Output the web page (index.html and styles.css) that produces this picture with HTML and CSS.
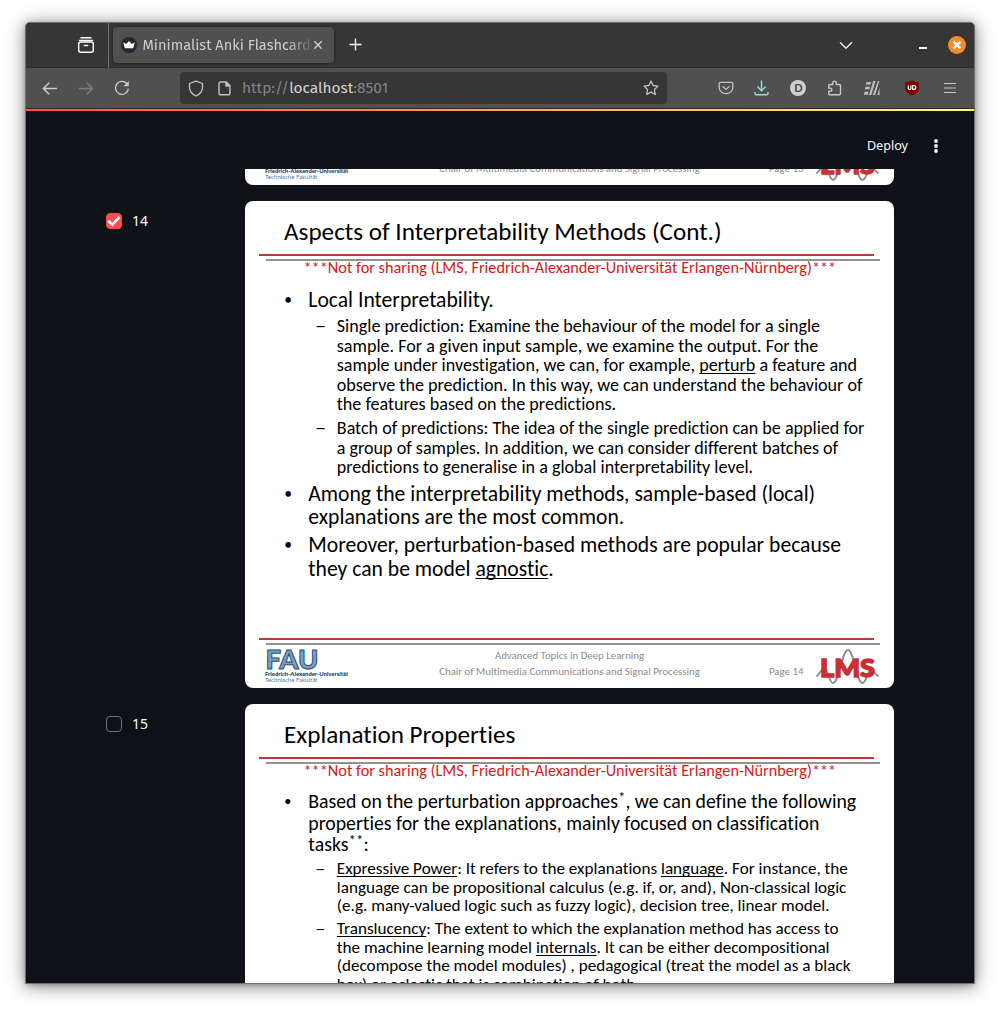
FILE: index.html
```html
<!DOCTYPE html>
<html lang="en">
<head>
<meta charset="utf-8">
<title>Minimalist Anki Flashcards</title>
<link rel="stylesheet" href="styles.css">
</head>
<body>
<svg width="0" height="0" class="defs">
  <symbol id="fau" viewBox="0 0 54 22">
    <text x=".5" y="20.600" textLength="53" lengthAdjust="spacingAndGlyphs" font-family="Lato, sans-serif" font-weight="900" font-size="27" fill="#7f9dbd" stroke="#24507f" stroke-width="1">FAU</text>
  </symbol>
  <symbol id="lms" viewBox="0 0 64 38">
    <path d="M0.500 28.500C5 24 6 20 9 21c4 2 4 14 8 14 6 0 9-33 15-33s8 33 14.500 33c4 0 5-12 8-13 3-.5 4 3.500 8 6.500" fill="none" stroke="#8d8d8d" stroke-width="1.800"/>
    <text x="4" y="29.300" textLength="55" lengthAdjust="spacingAndGlyphs" font-family="Lato, sans-serif" font-weight="900" font-size="25" fill="#c93030" stroke="#c93030" stroke-width="1.400">LMS</text>
  </symbol>
</svg>
<div class="window">
  <div class="tabbar">
    <div class="overview">
      <svg width="18" height="18" viewBox="0 0 18 18" fill="none" stroke="#fbfbfe" stroke-width="1.500" stroke-linecap="round"><path d="M4 1.700h10M2.500 4.600h13"/><rect x="1.700" y="6" width="14.600" height="10.300" rx="2"/><path d="M7.300 9.500h3.400"/></svg>
    </div>
    <div class="tab">
      <svg width="16" height="16" viewBox="0 0 16 16"><circle cx="8" cy="8" r="8" fill="#262730"/><path d="M2.200 5.200 5.200 7 8 4l2.800 3 3-1.800-1.600 6H3.800z" fill="#fff"/></svg>
      <span class="tab-title">Minimalist Anki Flashcards</span>
      <svg width="10" height="10" viewBox="0 0 10 10" stroke="#d0d0d0" stroke-width="1.400"><path d="M1.300 1.300l7.400 7.400M8.700 1.300 1.300 8.700"/></svg>
    </div>
    <svg class="plus" width="14" height="14" viewBox="0 0 14 14" stroke="#fff" stroke-width="1.300"><path d="M6.500 .5v12M.5 6.500h12"/></svg>
    <svg class="chevron" width="14" height="9" viewBox="0 0 14 9" fill="none" stroke="#e8e8e8" stroke-width="1.400"><path d="M1 1.300l6 6 6-6"/></svg>
    <span class="minimize"></span>
    <svg class="close" width="18" height="18" viewBox="0 0 18 18"><circle cx="9" cy="9" r="9" fill="#f28d2c"/><path d="M5.600 5.600l6.800 6.800M12.400 5.600l-6.800 6.800" stroke="#fff" stroke-width="2.300"/></svg>
  </div>
  <div class="toolbar">
    <svg class="back" width="16" height="14" viewBox="0 0 16 14" fill="none" stroke="#cfcfcf" stroke-width="1.400"><path d="M15 7.500H1.500M7.200 1.700 1.400 7.500l5.800 5.800"/></svg>
    <svg class="forward" width="16" height="14" viewBox="0 0 16 14" fill="none" stroke="#808080" stroke-width="1.400"><path d="M1 7.500h13.500M8.800 1.700 14.600 7.500l-5.800 5.800"/></svg>
    <svg class="reload" width="16" height="16" viewBox="0 0 16 16" fill="none" stroke="#cbcbcb" stroke-width="1.400"><path d="M13.300 4.200A6.500 6.500 0 1 0 14.400 8.600"/><path d="M14.800 1v5.300H9.500z" fill="#cbcbcb" stroke="none"/></svg>
    <div class="urlbar">
      <svg class="shield" width="16" height="17" viewBox="0 0 16 17" fill="none" stroke="#c2c2c2" stroke-width="1.300" stroke-linejoin="round"><path d="M8 1.100 14.500 3.500V7c0 4.300-2.800 7.300-6.500 9C4.300 14.300 1.500 11.300 1.500 7V3.500z"/></svg>
      <svg class="page" width="13" height="15" viewBox="0 0 13 15" fill="none" stroke="#c2c2c2" stroke-width="1.400" stroke-linejoin="round"><path d="M2.300 1h6l3.600 3.600V12.500a1.300 1.300 0 0 1-1.300 1.300H2.300A1.300 1.300 0 0 1 1 12.500V2.300A1.300 1.300 0 0 1 2.300 1z"/><path d="M8 1v4h4" fill="#c2c2c2"/></svg>
      <span class="url">http://<b>localhost</b>:8501</span>
      <svg class="star" width="16" height="16" viewBox="0 0 16 16" fill="none" stroke="#c2c2c2" stroke-width="1.300" stroke-linejoin="round"><path d="M8 1l2.100 4.500 4.900.6-3.600 3.400.9 5L8 12.100 3.700 14.500l.9-5L1 6.100l4.900-.6z"/></svg>
    </div>
    <div class="actions">
      <svg width="16" height="16" viewBox="0 0 16 16" fill="none" stroke="#c2c2c2" stroke-width="1.300"><path d="M2.500 2.300h11a1.300 1.300 0 0 1 1.300 1.300v3.800a6.800 6.300 0 0 1-13.600 0V3.600A1.300 1.300 0 0 1 2.500 2.300z"/><path d="M4.600 6.300 8 9.400l3.400-3.100"/></svg>
      <svg width="16" height="16" viewBox="0 0 16 16" fill="none" stroke="#8edfdd" stroke-width="1.400"><path d="M7.500 .5v10M3.300 6.500 7.500 10.700l4.200-4.200M1 12v1.500a1.300 1.300 0 0 0 1.300 1.300h10.400a1.300 1.300 0 0 0 1.300-1.300V12"/></svg>
      <span class="ddg">D</span>
      <svg width="16" height="16" viewBox="0 0 16 16" fill="none" stroke="#c6c6c6" stroke-width="1.400" stroke-linejoin="round"><path d="M1.800 7.500V5.500a1 1 0 0 1 1-1h3V2.800a1.700 1.700 0 0 1 3.400 0v1.700h3.300a1 1 0 0 1 1 1v8.300a1 1 0 0 1-1 1H2.800a1 1 0 0 1-1-1v-2.500h1.500a1.600 1.600 0 0 0 0-3.200H1"/></svg>
      <svg class="stripes" width="16" height="16" viewBox="0 0 16 16" fill="#bcbcbc"><path d="M2.500 2h4.700L6.500 4.500H1.800zM1.500 6.800h4.500l-.7 2.500H.8zM.5 11.700h4l-.8 3H0zM9.200 1h2.300L7.300 15H5zM14 1h1.300L11.100 15H8.800zM15.500 8v7h-2.200z"/></svg>
      <span class="ublock"><svg width="14" height="16" viewBox="0 0 14 16"><path d="M7 .3C9 1.800 11 2.200 13.700 2.300V8c0 4-3 6-6.700 7.700C3.300 14 .3 12 .3 8V2.300C3 2.200 5 1.800 7 .3z" fill="#800000"/><path d="M3.300 5.400v3.100c0 1.300 2.600 1.300 2.600 0V5.400" fill="none" stroke="#fff" stroke-width="1.200"/><path d="M7.600 5.500v3.900h1.200a1.900 1.900 0 0 0 0-3.900z" fill="none" stroke="#fff" stroke-width="1.200"/></svg></span>
      <svg class="menu" width="12" height="12" viewBox="0 0 12 12" stroke="#c6c6c6" stroke-width="1.200"><path d="M0 1.500h12M0 6h12M0 10.500h12"/></svg>
    </div>
  </div>
  <div class="decoration"></div>
  <div class="app">
    <div class="app-header">
      <span>Deploy</span>
      <svg width="4" height="14" viewBox="0 0 4 14" fill="#fafafa"><circle cx="2" cy="2" r="1.900"/><circle cx="2" cy="7" r="1.900"/><circle cx="2" cy="12" r="1.900"/></svg>
    </div>
    <main class="scroll">
      <div class="row row-cut">
        <div class="slide slide-cut">
          <footer class="foot">
            <div class="fau"><svg width="54" height="22"><use href="#fau"/></svg><b>Friedrich-Alexander-Universität</b><span>Technische Fakultät</span></div>
            <div class="course"><span>Advanced Topics in Deep Learning</span><span>Chair of Multimedia Communications and Signal Processing</span></div>
            <span class="pageno">Page 13</span>
            <svg class="lms" width="64" height="38"><use href="#lms"/></svg>
          </footer>
        </div>
      </div>
      <div class="row">
        <label class="pick"><span class="box checked"><svg width="14" height="12" viewBox="0 0 14 12" fill="none" stroke="#fff" stroke-width="2.700"><path d="M1.300 5.700 5.200 9.600 12.600 2"/></svg></span>14</label>
        <section class="slide slide-14">
          <h2>Aspects of Interpretability Methods (Cont.)</h2>
          <div class="rules"></div>
          <p class="notice">***Not for sharing (LMS, Friedrich-Alexander-Universität Erlangen-Nürnberg)***</p>
          <ul class="points">
            <li>Local Interpretability.
              <ul>
                <li>Single prediction: Examine the behaviour of the model for a single<br>sample. For a given input sample, we examine the output. For the<br>sample under investigation, we can, for example, <u>perturb</u> a feature and<br>observe the prediction. In this way, we can understand the behaviour of<br>the features based on the predictions.</li>
                <li>Batch of predictions: The idea of the single prediction can be applied for<br>a group of samples. In addition, we can consider different batches of<br>predictions to generalise in a global interpretability level.</li>
              </ul>
            </li>
            <li>Among the interpretability methods, sample-based (local)<br>explanations are the most common.</li>
            <li>Moreover, perturbation-based methods are popular because<br>they can be model <u>agnostic</u>.</li>
          </ul>
          <div class="rules"></div>
          <footer class="foot">
            <div class="fau"><svg width="54" height="22"><use href="#fau"/></svg><b>Friedrich-Alexander-Universität</b><span>Technische Fakultät</span></div>
            <div class="course"><span>Advanced Topics in Deep Learning</span><span>Chair of Multimedia Communications and Signal Processing</span></div>
            <span class="pageno">Page 14</span>
            <svg class="lms" width="64" height="38"><use href="#lms"/></svg>
          </footer>
        </section>
      </div>
      <div class="row">
        <label class="pick"><span class="box"></span>15</label>
        <section class="slide slide-15">
          <h2>Explanation Properties</h2>
          <div class="rules"></div>
          <p class="notice">***Not for sharing (LMS, Friedrich-Alexander-Universität Erlangen-Nürnberg)***</p>
          <ul class="points">
            <li>Based on the perturbation approaches<sup>*</sup>, we can define the following<br>properties for the explanations, mainly focused on classification<br>tasks<sup>**</sup>:
              <ul>
                <li><u>Expressive Power</u>: It refers to the explanations <u>language</u>. For instance, the<br>language can be propositional calculus (e.g. if, or, and), Non-classical logic<br>(e.g. many-valued logic such as fuzzy logic), decision tree, linear model.</li>
                <li><u>Translucency</u>: The extent to which the explanation method has access to<br>the machine learning model <u>internals</u>. It can be either decompositional<br>(decompose the model modules) , pedagogical (treat the model as a black<br>box) or eclectic that is combination of both.</li>
              </ul>
            </li>
          </ul>
        </section>
      </div>
    </main>
  </div>
</div>
</body>
</html>
```
FILE: styles.css
```css
* { box-sizing: border-box; }
body { margin: 0; padding: 22px 25px; background: #fff; height: 1012px; overflow: hidden; font-family: "Noto Sans", sans-serif; }
svg { display: block; flex: none; }
.defs { position: absolute; }

.window { width: 950px; height: 962px; border: 1px solid #707070; border-radius: 5px 5px 0 0; overflow: hidden; display: flex; flex-direction: column; background: #0e1117; box-shadow: 0 2px 18px rgba(0,0,0,.5), 0 1px 4px rgba(0,0,0,.2); }

.tabbar { height: 45px; flex: none; background: #363636; display: flex; align-items: center; border-bottom: 1px solid #2e2e2e; }
.overview { width: 83px; height: 45px; border-right: 1px solid #707070; display: flex; align-items: center; padding-left: 51px; }
.tab { width: 221px; height: 36px; margin-left: 4px; padding: 0 11px 0 8px; background: #505050; border-radius: 4px; box-shadow: 0 0 3px rgba(0,0,0,.6); display: flex; align-items: center; }
.tab-title { width: 169px; margin-left: 5.5px; margin-right: 1.5px; overflow: hidden; white-space: nowrap; font: 14.6px/22px "Fira Sans", "Noto Sans", sans-serif; color: #cdcdcd; -webkit-mask-image: linear-gradient(90deg, #000 85%, transparent 102%); mask-image: linear-gradient(90deg, #000 85%, transparent 102%); }
.plus { margin-left: 15px; }
.chevron { margin-left: 476px; }
.minimize { width: 8px; height: 2px; background: #fff; margin: 5px 0 0 66px; }
.close { margin-left: 21px; }

.toolbar { height: 41px; flex: none; background: #505050; border-bottom: 1px solid #2c2c2c; display: flex; align-items: center; }
.back { margin-left: 16px; }
.forward { margin-left: 20px; }
.reload { margin-left: 20px; }
.urlbar { width: 487px; height: 32px; margin-left: 50px; background: #363636; border-radius: 4px; display: flex; align-items: center; padding: 0 8px; }
.page { margin-left: 13.5px; }
.url { flex: 1; margin-left: 11.5px; font: 15.4px/22px "Fira Sans", "Noto Sans", sans-serif; color: #858585; }
.url b { font-weight: 400; color: #d4d4d4; }
.actions { display: flex; align-items: center; gap: 20.2px; margin-left: 51px; }
.ddg { width: 16px; height: 16px; border-radius: 50%; background: #cfcfcf; color: #505050; font: 900 11px/16px Lato, sans-serif; text-align: center; }
.stripes { margin-left: 1px; }
.ublock { padding: 0 3px 0 5px; }
.menu { margin-left: 1.5px; }

.decoration { height: 2px; flex: none; background: linear-gradient(90deg, #ff4b4b, #ffc06a 67%, #fffd80); }
.app { flex: 1; min-height: 0; color: #fafafa; display: flex; flex-direction: column; }
.app-header { height: 58px; flex: none; display: flex; align-items: center; justify-content: flex-end; padding: 11px 36px 0 0; gap: 26px; font-size: 12.6px; }
.scroll { flex: 1; min-height: 0; overflow: hidden; display: flex; flex-direction: column; gap: 16px; }
.row { flex: none; display: flex; padding-right: 80px; justify-content: space-between; }
.row-cut { height: 16px; align-items: flex-end; justify-content: flex-end; overflow: hidden; }
.pick { display: flex; align-items: center; gap: 10px; height: 24px; margin: 8px 0 0 80px; font-size: 14px; line-height: 18px; }
.box { width: 16px; height: 16px; border: 1px solid #6f7178; border-radius: 4px; display: flex; align-items: center; justify-content: center; }
.box.checked { background: #ff4b4b; border-color: #ff4b4b; }

.slide { width: 649px; height: 487px; flex: none; background: #fff; color: #000; border-radius: 8px; font-family: Carlito, Lato, sans-serif; font-variant-ligatures: none; display: flex; flex-direction: column; overflow: hidden; }
.slide-cut { justify-content: flex-end; }
.slide h2 { margin: 0; height: 53px; flex: none; padding-left: 39px; font-size: 25.17px; font-weight: 400; line-height: 62px; white-space: nowrap; }
.rules { height: 7px; flex: none; margin: 0 13.5px 0 14px; background: linear-gradient(#b93a3a, #b93a3a) 0 0 / 615px 2px no-repeat, linear-gradient(#929292, #929292) 7px 4.5px / 614px 2px no-repeat; }
.notice { margin: -2px 0 0; padding-left: 58.5px; font-size: 16.28px; line-height: 16px; color: #d81818; white-space: nowrap; }
ul { list-style: none; margin: 0; padding: 0; }
li { position: relative; white-space: nowrap; }
.points { flex: 1; min-height: 0; display: flex; flex-direction: column; gap: 4.5px; padding: 13px 0 0 63.3px; font-size: 21.63px; line-height: 23.4px; }
.points > li::before { content: "•"; position: absolute; left: -24px; font-size: .72em; }
.points ul { padding: 5.6px 0 0 28.5px; display: flex; flex-direction: column; gap: 4.5px; font-size: 18.09px; line-height: 19.5px; }
.points ul li::before { content: "–"; position: absolute; left: -21.5px; transform: scaleX(1.25); transform-origin: 0 50%; }
.slide-15 .points { font-size: 19.8px; line-height: 21.2px; padding-top: 13.3px; }
.slide-15 .points ul { font-size: 17.14px; line-height: 18.5px; padding-top: 5.4px; }
u { text-decoration-thickness: 1px; text-underline-offset: 2px; text-decoration-skip-ink: none; }
sup { font-size: .76em; line-height: 0; vertical-align: .4em; }

.foot { height: 43px; flex: none; display: grid; grid-template-columns: 84px 442px 25px 64px; padding-left: 20px; color: #8c8c8c; font-size: 10.83px; }
.fau { display: flex; flex-direction: column; padding-top: 3px; white-space: nowrap; }
.fau b { font: 900 5.85px/7px Lato, sans-serif; color: #17406f; }
.fau span { font: 6.1px/6px Lato, sans-serif; color: #4a7fa5; }
.course { display: flex; flex-direction: column; align-items: center; line-height: 16px; padding: 3px 1px 0 0; }
.pageno { line-height: 16px; padding-top: 19px; margin-left: -22px; white-space: nowrap; }
.lms { margin-top: 3px; }
```
